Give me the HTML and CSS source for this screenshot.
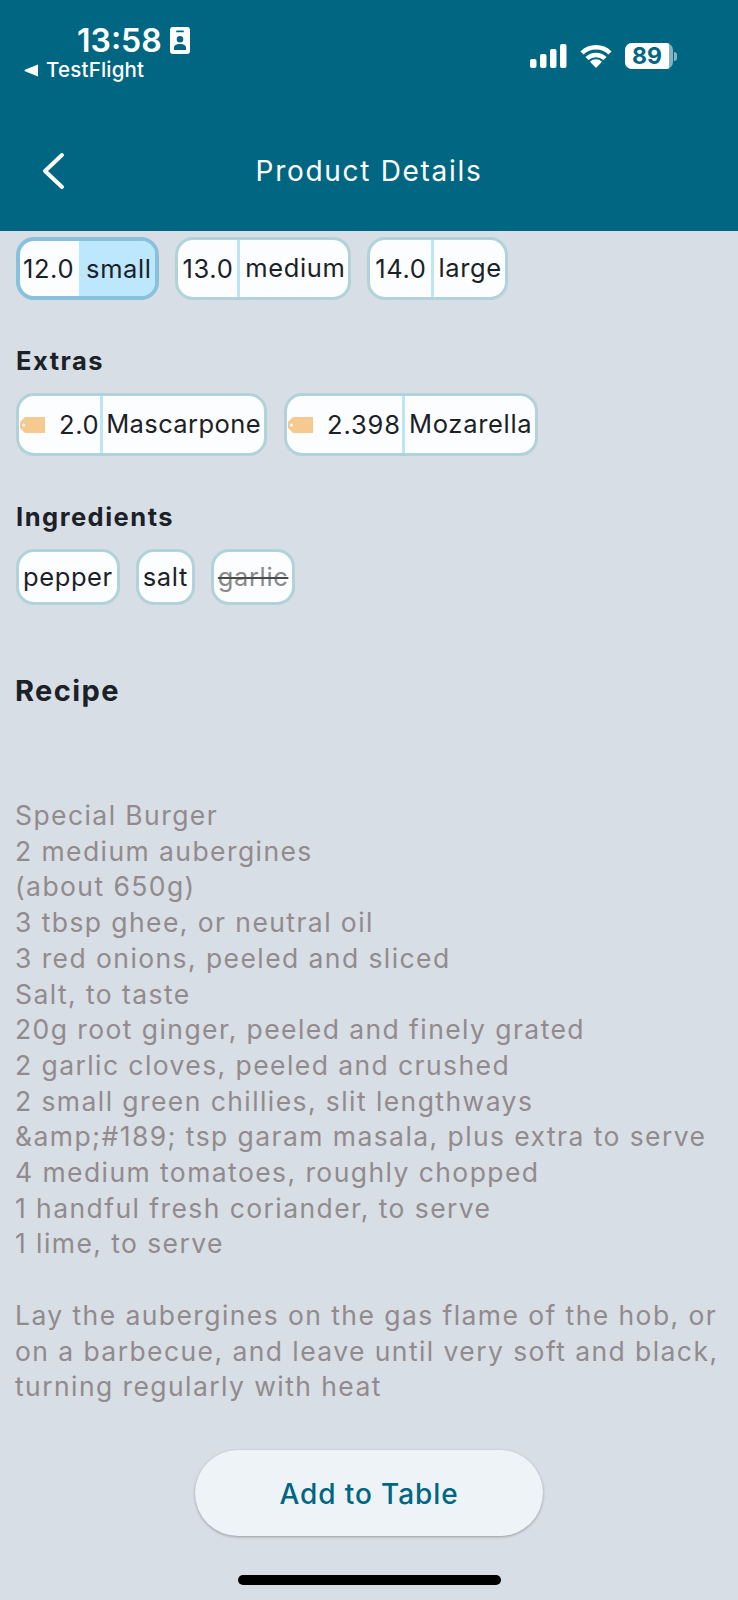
FILE: index.html
```html
<!DOCTYPE html>
<html lang="en">
<head>
<meta charset="utf-8">
<title>Product Details</title>
<link rel="stylesheet" href="styles.css">
</head>
<body>
<div class="screen">
  <header class="header">
    <div class="status">
      <div class="status-left">
        <div class="time-row">
          <span class="time">13:58</span>
          <svg class="badge" width="20" height="27" viewBox="0 0 20 27"><path fill="#fff" fill-rule="evenodd" d="M3 0h14a3 3 0 0 1 3 3v21a3 3 0 0 1-3 3H3a3 3 0 0 1-3-3V3a3 3 0 0 1 3-3zM7 3.500a.8.8 0 0 0 0 1.800h6a.8.8 0 0 0 0-1.800zM10 9a3.300 3.300 0 1 0 0 6.600A3.300 3.300 0 0 0 10 9zM4 23h12v-2.500c0-2-2.500-3.500-6-3.500s-6 1.500-6 3.500z"/></svg>
        </div>
        <div class="back-app"><svg width="14" height="13" viewBox="0 0 14 13"><path fill="#fff" d="M14 .5v12L1 7.200a.8.8 0 0 1 0-1.400z"/></svg><span>TestFlight</span></div>
      </div>
      <div class="status-right">
        <svg width="37" height="24" viewBox="0 0 37 24"><g fill="#fff"><rect x="0" y="15" width="6.500" height="9" rx="2"/><rect x="10" y="10" width="6.500" height="14" rx="2"/><rect x="20" y="5" width="6.500" height="19" rx="2"/><rect x="30" y="0" width="6.500" height="24" rx="2"/></g></svg>
        <svg class="wifi" width="32" height="24" viewBox="0 0 32 24"><path fill="none" stroke="#fff" stroke-width="4.500" d="M2 9a20 20 0 0 1 28 0M7 14.500a13 13 0 0 1 18 0"/><path fill="#fff" d="M16 24l-6-6.300a8.500 8.500 0 0 1 12 0z"/></svg>
        <div class="battery"><div class="battery-body"><span class="battery-level">89</span><span class="battery-rest"></span></div><span class="battery-cap"></span></div>
      </div>
    </div>
    <div class="nav">
      <svg class="back" width="24" height="38" viewBox="0 0 24 38"><path fill="none" stroke="#fff" stroke-width="4" stroke-linecap="round" stroke-linejoin="round" d="M21 3L4 19l17 16"/></svg>
      <h1 class="title">Product Details</h1>
    </div>
  </header>

  <main class="content">
    <div class="chips">
      <div class="chip selected"><span class="price">12.0</span><span class="name">small</span></div>
      <div class="chip"><span class="price">13.0</span><span class="name">medium</span></div>
      <div class="chip"><span class="price">14.0</span><span class="name">large</span></div>
    </div>

    <h2 class="label">Extras</h2>
    <div class="chips">
      <div class="chip extra">
        <span class="price"><svg class="tag" width="25" height="16" viewBox="0 0 25 16"><path fill="#f5c98f" fill-rule="evenodd" d="M5 0h20v16H5L0 11V5zM3.500 6.500a1.500 1.500 0 1 0 0 3 1.500 1.500 0 0 0 0-3z"/></svg><span>2.0</span></span>
        <span class="name">Mascarpone</span>
      </div>
      <div class="chip extra extra-wide">
        <span class="price"><svg class="tag" width="25" height="16" viewBox="0 0 25 16"><path fill="#f5c98f" fill-rule="evenodd" d="M5 0h20v16H5L0 11V5zM3.500 6.500a1.500 1.500 0 1 0 0 3 1.500 1.500 0 0 0 0-3z"/></svg><span>2.398</span></span>
        <span class="name">Mozarella</span>
      </div>
    </div>

    <h2 class="label">Ingredients</h2>
    <div class="chips">
      <div class="chip plain">pepper</div>
      <div class="chip plain">salt</div>
      <div class="chip plain"><s class="off">garlic</s></div>
    </div>

    <h2 class="recipe-title">Recipe</h2>
    <p class="recipe">Special Burger
2 medium aubergines
(about 650g)
3 tbsp ghee, or neutral oil
3 red onions, peeled and sliced
Salt, to taste
20g root ginger, peeled and finely grated
2 garlic cloves, peeled and crushed
2 small green chillies, slit lengthways
&amp;amp;#189; tsp garam masala, plus extra to serve
4 medium tomatoes, roughly chopped
1 handful fresh coriander, to serve
1 lime, to serve

Lay the aubergines on the gas flame of the hob, or
on a barbecue, and leave until very soft and black,
turning regularly with heat</p>
    <div class="actions"><button class="add">Add to Table</button></div>
    <div class="home"></div>
  </main>
</div>
</body>
</html>
```
FILE: styles.css
```css
* { box-sizing: border-box; }
html, body { margin: 0; padding: 0; }
body {
  width: 738px;
  height: 1600px;
  overflow: hidden;
  background: #d7dee5;
  font-family: Inter, "Liberation Sans", sans-serif;
}
.screen { display: flex; flex-direction: column; height: 1600px; }

.header { height: 231px; background: #006682; color: #fff; flex: none; }
.status { display: flex; justify-content: space-between; padding: 24px 61px 0 24px; }
.status-left { display: flex; flex-direction: column; align-items: flex-start; }
.time-row { display: flex; align-items: center; gap: 8px; padding-left: 53px; height: 33px; }
.time { font-size: 32px; font-weight: 600; line-height: 33px; }
.back-app { display: flex; align-items: center; gap: 8px; font-size: 20.500px; font-weight: 500; line-height: 26px; letter-spacing: .2px; }
.status-right { display: flex; align-items: center; gap: 13px; height: 30px; margin-top: 17px; }
.battery { display: flex; align-items: center; gap: 1px; }
.battery-body { display: flex; width: 48px; height: 26px; border-radius: 7px; overflow: hidden; background: #84b3c1; }
.battery-level { width: 44px; background: #fff; color: #006682; font-size: 23px; font-weight: 700; line-height: 26px; text-align: center; }
.battery-rest { flex: 1; }
.battery-cap { width: 3px; height: 9px; border-radius: 0 3px 3px 0; background: #84b3c1; }

.nav { position: relative; display: flex; justify-content: center; align-items: center; margin-top: 59px; height: 58px; }
.back { position: absolute; left: 41px; top: 10px; }
.title { margin: 0; font-size: 28px; font-weight: 400; letter-spacing: 1.700px; line-height: 36px; }

.content { padding: 6px 16px 0; color: #1b2127; }
.chips { display: flex; gap: 16px; }
.chip {
  display: flex;
  align-items: stretch;
  height: 63px;
  border: 3.500px solid #b2d2da;
  border-radius: 18px;
  background: #fcfdfe;
  overflow: hidden;
  font-size: 25.500px;
  letter-spacing: .6px;
  line-height: 56px;
}
.price, .name { display: block; white-space: nowrap; }
.price { display: flex; align-items: center; padding: 0 4px 0 5px; border-right: 3px solid #bde5f7; }
.name { padding: 0 3px 0 5px; }
.selected { border-color: #88c1db; border-width: 4px; }
.selected .price { border-right: 0; padding-right: 5px; padding-left: 3px; }
.selected .name { background: #bde7fc; padding: 0 3px 0 7px; }

.label { margin: 45px 0 16px; font-size: 25.500px; font-weight: 700; letter-spacing: 1.500px; line-height: 32px; }
.extra { margin-right: 1px; }
.extra .price { padding: 0 1px 0 1px; }
.tag { margin-right: 14px; flex: none; }
.extra .name { padding: 0 3px 0 3px; letter-spacing: .4px; }
.extra-wide .price { letter-spacing: .9px; }
.extra-wide .name { padding-left: 4px; letter-spacing: .7px; }
.plain { height: 56px; padding: 0 4px; line-height: 49px; }
.off { color: #8a8a8a; text-decoration-color: #4a4a4a; text-decoration-thickness: 2px; }

.recipe-title { margin: 68px 0 0 -1px; font-size: 29px; font-weight: 700; letter-spacing: 1.400px; line-height: 36px; }
.recipe { margin: 89px 0 0 -1px; font-size: 26.500px; line-height: 35.700px; letter-spacing: 1.420px; color: #928a8d; white-space: pre-wrap; }
.actions { display: flex; justify-content: center; margin-top: 45px; }
.add {
  width: 348px;
  height: 86px;
  padding: 2px 0 0;
  border: 0;
  border-radius: 43px;
  background: #eef3f7;
  box-shadow: 0 1px 3px rgba(0, 0, 0, .3);
  color: #006682;
  font: 500 28px Inter, "Liberation Sans", sans-serif;
  letter-spacing: .9px;
}
.home { width: 263px; height: 10px; margin: 39px auto 0; border-radius: 5px; background: #000; }
```
